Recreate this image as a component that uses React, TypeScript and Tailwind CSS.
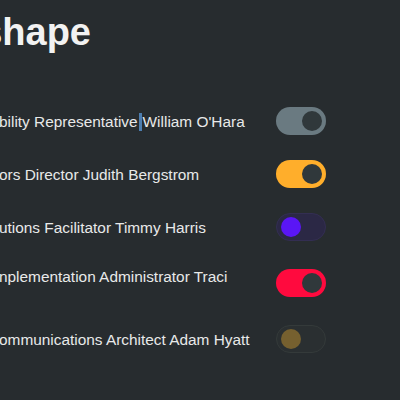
import React from "react";

type Row = {
  label: string;
  on: boolean;
  track: string;
  knob: string;
  tall?: boolean;
  caret?: boolean;
};

const rows: Row[] = [
  { label: "bility Representative", on: true, track: "bg-[#6a7a81]", knob: "bg-[#30383b]", caret: true },
  { label: "ors Director Judith Bergstrom", on: true, track: "bg-[#ffae2b]", knob: "bg-[#30383b]" },
  { label: "utions Facilitator Timmy Harris", on: false, track: "bg-[#2b2845] border border-[#332e52]", knob: "bg-[#5a16f5]" },
  { label: "nplementation Administrator Traci", on: true, track: "bg-[#ff0a3e]", knob: "bg-[#30383b]", tall: true },
  { label: "ommunications Architect Adam Hyatt", on: false, track: "bg-[#2a2f31] border border-[#343a3a]", knob: "bg-[#76602f]" },
];

function Toggle({ row }: { row: Row }) {
  return (
    <div
      className={`flex h-[28px] w-[50px] shrink-0 items-center self-center rounded-full px-[4px] ${row.track} ${
        row.on ? "justify-end" : "justify-start"
      }`}
    >
      <div className={`h-[20px] w-[20px] rounded-full ${row.knob}`} />
    </div>
  );
}

export default function App() {
  return (
    <div className="h-[400px] w-[400px] overflow-hidden bg-[#272c2f] font-['Liberation_Sans',sans-serif] text-[#e8e9e9]">
      <div className="flex w-[91px] justify-end pt-[13px]">
        <h1 className="whitespace-nowrap text-[38px] font-bold leading-none text-[#f2f2f2]">shape</h1>
      </div>

      <div className="mt-[56px] flex flex-col gap-[25px] pr-[74px]">
        {rows.map((row, i) => (
          <div key={i} className={`flex ${row.tall ? "h-[34px] items-start" : "h-[28px] items-center"}`}>
            <div className="-ml-[1px] flex-1 whitespace-nowrap pt-[2px] text-[15.4px] leading-[18px]">
              {row.label}
              {row.caret && (
                <>
                  <span className="mx-[1px] inline-block h-[18px] w-[3px] bg-[#4d7eb0] align-middle" />
                  William O'Hara
                </>
              )}
            </div>
            <Toggle row={row} />
          </div>
        ))}
      </div>
    </div>
  );
}
